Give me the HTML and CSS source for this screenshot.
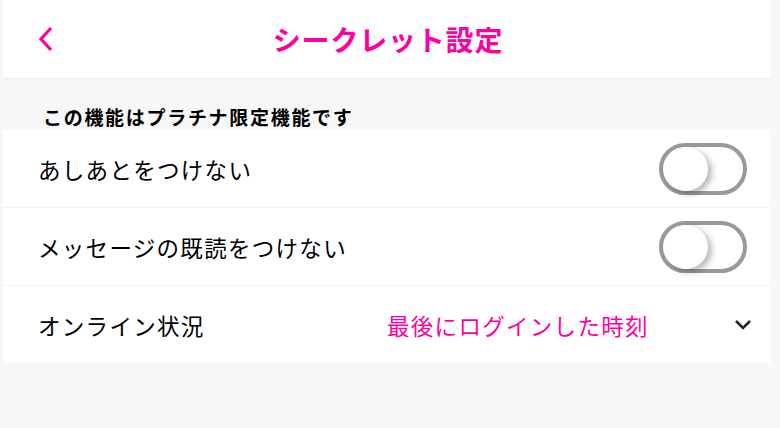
FILE: index.html
```html
<!DOCTYPE html>
<html lang="ja">
<head>
  <meta charset="utf-8">
  <title>シークレット設定</title>
  <link rel="stylesheet" href="styles.css">
</head>
<body>
  <div class="panel">
    <div class="header">
      <a class="back" href="#">
        <svg width="16" height="26" viewBox="0 0 16 26"><polyline points="13,2 3,13 13,24" fill="none" stroke="#ff00a0" stroke-width="3.2"/></svg>
      </a>
      <div class="title">シークレット設定</div>
    </div>
    <div class="notice">この機能はプラチナ限定機能です</div>
    <div class="row">
      <div class="label">あしあとをつけない</div>
      <div class="toggle"><span class="knob"></span></div>
    </div>
    <div class="row">
      <div class="label">メッセージの既読をつけない</div>
      <div class="toggle"><span class="knob"></span></div>
    </div>
    <div class="row select">
      <div class="label">オンライン状況</div>
      <div class="value">最後にログインした時刻</div>
      <svg class="caret" width="18" height="12" viewBox="0 0 18 12"><polyline points="2,2 9,9 16,2" fill="none" stroke="#222" stroke-width="2.6"/></svg>
    </div>
  </div>
</body>
</html>
```

FILE: styles.css
```css
body {
  margin: 0;
  background: #f7f7f7;
  font-family: "Noto Sans CJK JP", "Noto Sans", sans-serif;
  color: #111;
}
.panel {
  margin-left: 3px;
  width: 768px;
}
.header {
  height: 78px;
  background: #fff;
  border-bottom: 1px solid #ededed;
  display: flex;
  align-items: center;
  justify-content: center;
  position: relative;
}
.back {
  position: absolute;
  left: 35px;
  top: 26px;
}
.title {
  color: #ff00a0;
  font-size: 28px;
  font-weight: bold;
  letter-spacing: 0.8px;
  margin-left: 2px;
}
.notice {
  height: 51px;
  box-sizing: border-box;
  padding: 25px 0 0 40px;
  font-size: 19px;
  font-weight: bold;
  letter-spacing: 1.7px;
  line-height: 26px;
  color: #000;
}
.row {
  width: 767px;
  height: 77px;
  background: #fff;
  border-bottom: 1px solid #f2f2f2;
  display: flex;
  align-items: center;
}
.row:last-child { border-bottom: none; }
.label {
  padding-left: 35px;
  font-size: 22.5px;
  letter-spacing: 1.3px;
  flex: 1;
  color: #000;
}
.select .label {
  flex: none;
  width: 349px;
}
.value {
  flex: 1;
  color: #ff00a0;
  font-size: 22.5px;
  letter-spacing: 1.3px;
}
.caret {
  margin-right: 18px;
}
.toggle {
  width: 80px;
  height: 44px;
  border: 4px solid #999;
  border-radius: 30px;
  margin-right: 23px;
  margin-top: 1px;
  position: relative;
}
.knob {
  position: absolute;
  left: 1px;
  top: 0;
  width: 44px;
  height: 44px;
  border-radius: 50%;
  background: #fff;
  box-shadow: 4px 3px 6px rgba(0,0,0,0.28);
}
```
